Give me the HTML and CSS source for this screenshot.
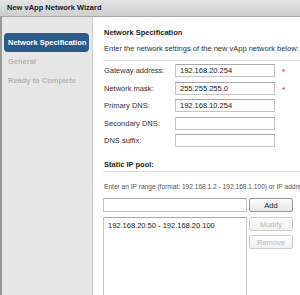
FILE: index.html
```html
<!DOCTYPE html>
<html lang="en">
<head>
  <meta charset="UTF-8">
  <title>New vApp Network Wizard</title>
  <link rel="stylesheet" href="styles.css">
</head>
<body>
  <div class="window">
    <!-- title bar -->
    <div class="titlebar">New vApp Network Wizard</div>

    <div class="main">
      <!-- wizard steps -->
      <ul class="steps">
        <li class="step active">Network Specification</li>
        <li class="step">General</li>
        <li class="step">Ready to Complete</li>
      </ul>

      <div class="content">
        <div class="heading">Network Specification</div>
        <div class="intro">Enter the network settings of the new vApp network below:</div>

        <div class="form">
          <div class="row">
            <label>Gateway address:</label>
            <input type="text" value="192.168.20.254">
            <span class="req">*</span>
          </div>
          <div class="row">
            <label>Network mask:</label>
            <input type="text" value="255.255.255.0">
            <span class="req">*</span>
          </div>
          <div class="row">
            <label>Primary DNS:</label>
            <input type="text" value="192.168.10.254">
          </div>
          <div class="row">
            <label>Secondary DNS:</label>
            <input type="text" value="">
          </div>
          <div class="row">
            <label>DNS suffix:</label>
            <input type="text" value="">
          </div>
        </div>

        <div class="subheading">Static IP pool:</div>
        <div class="hint">Enter an IP range (format: 192.168.1.2 - 192.168.1.100) or IP address and click Add.</div>

        <div class="pool">
          <input type="text" class="pool-input" value="">
          <button class="btn">Add</button>
          <div class="pool-list">
            <div class="pool-item">192.168.20.50 - 192.168.20.100</div>
          </div>
          <div class="pool-buttons">
            <button class="btn" disabled>Modify</button>
            <button class="btn" disabled>Remove</button>
          </div>
        </div>
      </div>
    </div>
  </div>
</body>
</html>
```

FILE: styles.css
```css
body {
  margin: 0;
  font-family: "Liberation Sans", Arial, sans-serif;
  font-size: 7.5px;
  color: #333;
  background: #fff;
  overflow: hidden;
}

.window {
  width: 300px;
  height: 295px;
  display: flex;
  flex-direction: column;
  overflow: hidden;
}

/* title bar */
.titlebar {
  height: 16px;
  line-height: 16px;
  padding-left: 7px;
  font-weight: bold;
  color: #222;
  background: linear-gradient(#e4e4e4, #cdcdcd);
  border-bottom: 1px solid #a8a8a8;
}

.main {
  flex: 1;
  display: flex;
  min-height: 0;
}

/* steps column */
.steps {
  list-style: none;
  margin: 0;
  padding: 16px 3px 0 2px;
  width: 85px;
  background: #e6e6e6;
  border-left: 2px solid #999;
  border-right: 1px solid #cfcfcf;
}

.step {
  height: 19px;
  line-height: 19px;
  padding-left: 4px;
  font-weight: bold;
  color: #b3b3b3;
  white-space: nowrap;
}

.step.active {
  background: #2c5b8b;
  color: #fff;
  border-radius: 4px;
}

/* right side */
.content {
  flex: 1;
  min-width: 0;
  padding: 10px 0 0 10px;
  overflow: hidden;
}

.heading {
  line-height: 12px;
  font-weight: bold;
  color: #222;
  padding-left: 1px;
}

.intro {
  margin-top: 4px;
  line-height: 12px;
  padding-left: 1px;
  padding-bottom: 5px;
  white-space: nowrap;
  border-bottom: 1px solid #dcdcdc;
}

.form {
  padding-top: 3px;
}

.row {
  display: flex;
  align-items: center;
  height: 13px;
  margin-bottom: 4.5px;
}

.row label {
  width: 71px;
  padding-left: 1px;
}

input {
  box-sizing: border-box;
  font-family: "Liberation Sans", Arial, sans-serif;
  font-size: 7.5px;
  color: #222;
  border: 1px solid #c4c4c4;
  border-top-color: #aaa;
  background: #fff;
  padding: 0 4px;
  margin: 0;
  outline: none;
}

.row input {
  width: 100px;
  height: 13px;
}

.req {
  margin-left: 7px;
  color: #e0505a;
  font-size: 8px;
  font-weight: bold;
  line-height: 8px;
  padding-top: 3px;
}

.subheading {
  margin-top: 12px;
  line-height: 12px;
  font-weight: bold;
  color: #222;
  padding-left: 1px;
  border-bottom: 1px solid #dcdcdc;
}

.hint {
  margin-top: 10px;
  line-height: 10px;
  font-size: 6.6px;
  color: #555;
  white-space: nowrap;
  padding-left: 1px;
}

.pool {
  margin-top: 6px;
  display: grid;
  grid-template-columns: 144px 44px;
  column-gap: 2px;
  row-gap: 5px;
}

.pool-input {
  height: 14px;
}

.pool-list {
  height: 110px;
  border: 1px solid #c4c4c4;
  border-top-color: #aaa;
  box-sizing: border-box;
}

.pool-item {
  padding: 3px 4px;
  line-height: 9px;
  color: #222;
}

.pool-buttons {
  display: flex;
  flex-direction: column;
  gap: 4px;
}

.btn {
  height: 14px;
  padding: 0;
  font-family: "Liberation Sans", Arial, sans-serif;
  font-size: 7.5px;
  color: #222;
  background: linear-gradient(#fbfbfb, #e6e6e6);
  border: 1px solid #999;
  border-radius: 2px;
}

.btn:disabled {
  color: #b8b8b8;
  border-color: #cdcdcd;
  background: linear-gradient(#fdfdfd, #f1f1f1);
}
```
